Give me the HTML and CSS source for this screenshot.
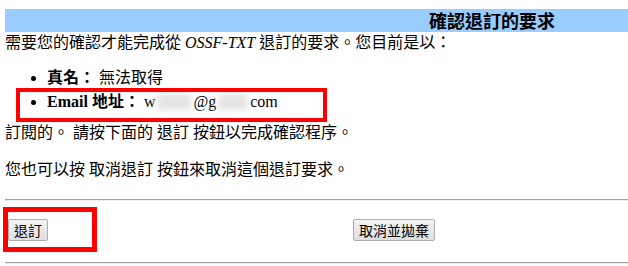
FILE: index.html
```html
<!DOCTYPE html>
<html lang="zh-Hant">
<head>
    <meta charset="UTF-8">
    <title>確認退訂的要求</title>
    <link rel="stylesheet" href="styles.css">
</head>
<body>
    <div class="title-bar">確認退訂的要求</div>
    <p class="intro">需要您的確認才能完成從 <em>OSSF-TXT</em> 退訂的要求。您目前是以：</p>
    <ul class="info">
        <li><b>真名：</b> 無法取得</li>
        <li class="marked">
            <b>Email 地址：</b> w<span class="blurred wide"></span>@g<span class="blurred"></span>com
            <span class="mark mark-email"></span>
        </li>
    </ul>
    <p class="note">訂閱的。 請按下面的 退訂 按鈕以完成確認程序。</p>
    <p class="note second">您也可以按 取消退訂 按鈕來取消這個退訂要求。</p>
    <hr>
    <form class="actions">
        <button type="button" class="btn">退訂</button>
        <button type="button" class="btn btn-cancel">取消並拋棄</button>
        <span class="mark mark-button"></span>
    </form>
    <hr class="last">
</body>
</html>
```

FILE: styles.css
```css
body {
    margin: 0;
    padding: 9px 0 0 5px;
    font-family: "Liberation Serif", "Noto Sans CJK TC", serif;
    font-size: 16px;
    color: #000;
    background: #fff;
}
.title-bar {
    background-color: #99ccff; /* light blue header strip */
    height: 23px;
    line-height: 23px;
    text-align: right;
    padding-right: 73px;
    font-family: "Noto Sans CJK TC", sans-serif;
    font-size: 18px;
    font-weight: bold;
}
.intro {
    margin: 0;
    line-height: 22px;
}
.intro em {
    font-family: "Liberation Serif", serif;
}
.info {
    margin: 12px 0 8px;
    padding-left: 42px;
    line-height: 24px;
}
.info b {
    font-weight: bold;
}
.marked {
    position: relative;
}
.blurred {
    display: inline-block;
    width: 30px;
    height: 16px;
    vertical-align: -3px;
    background: #e4e4e4;
    filter: blur(3px);
    margin: 0 2px;
}
.blurred.wide {
    width: 34px;
}
.note {
    margin: 0;
    line-height: 22px;
}
.note.second {
    margin-top: 15px;
}
hr {
    margin: 18px 0 0;
    border: none;
    border-top: 1px solid #a0a0a0;
    border-bottom: 1px solid #ececec;
}
hr.last {
    margin: 0;
}
.actions {
    position: relative;
    display: flex;
    align-items: flex-start;
    padding: 18px 0 21px 3px;
    margin: 0;
}
.btn {
    height: 22px;
    padding: 0 5px;
    font-family: "Noto Sans CJK TC", sans-serif;
    font-size: 14px;
    line-height: 20px;
    color: #000;
    background: linear-gradient(#f4f4f4, #dedede);
    border: 1px solid #adadad;
    border-radius: 2px;
}
.btn-cancel {
    margin-left: 305px;
}
/* red annotation frames */
.mark {
    position: absolute;
    box-sizing: border-box;
    border: 4px solid #ff0000;
    pointer-events: none;
}
.mark-email {
    left: -31px;
    top: -2px;
    width: 311px;
    height: 34px;
}
.mark-button {
    left: -2px;
    top: 6px;
    width: 94px;
    height: 45px;
    border-width: 5px;
}
```
